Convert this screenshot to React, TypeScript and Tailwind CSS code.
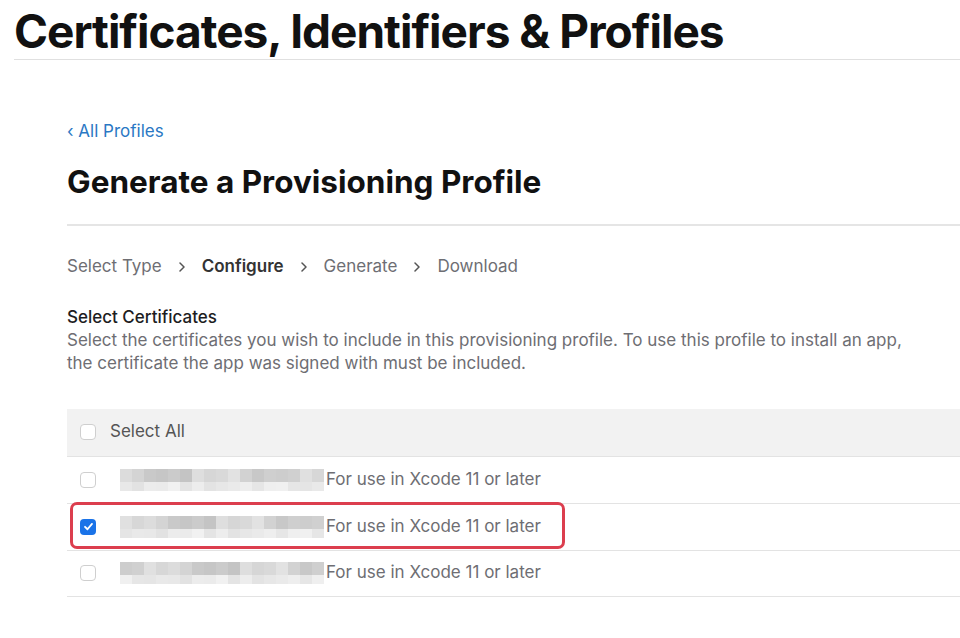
import React from "react";

const font = { fontFamily: "Inter, 'Noto Sans', sans-serif" };

const shades = [
  ["#c9c9c9", "#d6d6d6", "#cfcfcf", "#dcdcdc", "#c4c4c4", "#d2d2d2", "#e0e0e0", "#c6c6c6", "#d9d9d9", "#cdcdcd", "#d4d4d4", "#dedede", "#c8c8c8", "#d7d7d7", "#cbcbcb", "#e2e2e2", "#d0d0d0"],
  ["#e6e6e6", "#ececec", "#e3e3e3", "#efefef", "#e8e8e8", "#e4e4e4", "#eeeeee", "#e5e5e5", "#ebebeb", "#e7e7e7", "#f0f0f0", "#e2e2e2", "#ededed", "#e6e6e6", "#e9e9e9", "#f1f1f1", "#eaeaea"],
];

function Mosaic({ seed }: { seed: number }) {
  return (
    <div className="flex flex-col w-[204px] shrink-0">
      {shades.map((row, r) => (
        <div key={r} className={r === 0 ? "flex h-[13px]" : "flex h-[9px]"}>
          {row.map((_, i) => {
            const c = row[(i * 7 + seed * 3 + r) % row.length];
            return <div key={i} className="w-[12px] h-full" style={{ background: c }} />;
          })}
        </div>
      ))}
    </div>
  );
}

function Checkbox({ checked }: { checked?: boolean }) {
  if (checked)
    return (
      <div className="w-[16px] h-[16px] rounded-[4px] bg-[#1a73e8] flex items-center justify-center shrink-0">
        <svg width="11" height="11" viewBox="0 0 12 12" fill="none">
          <path d="M2.2 6.3 L4.9 9 L9.8 3.2" stroke="white" strokeWidth="2" strokeLinecap="round" strokeLinejoin="round" />
        </svg>
      </div>
    );
  return <div className="w-[16px] h-[16px] rounded-[4px] border border-[#cfcfcf] bg-white shrink-0" />;
}

function Chevron() {
  return (
    <svg width="6" height="12" viewBox="0 0 6 12" fill="none" className="ml-[17px] mr-[17px]">
      <path d="M1 2 L5 6 L1 10" stroke="#555" strokeWidth="1.5" strokeLinecap="round" strokeLinejoin="round" />
    </svg>
  );
}

function CertRow({ checked, seed, last }: { checked?: boolean; seed: number; last?: boolean }) {
  return (
    <div className={"relative h-[47px] flex items-center pl-[13px] border-t border-[#e3e3e3]" + (last ? " border-b" : "")}>
      <Checkbox checked={checked} />
      <div className="ml-[24px] flex items-center">
        <Mosaic seed={seed} />
        <span className="text-[17px] text-[#6e6e73] ml-[2px]">For use in Xcode 11 or later</span>
      </div>
      {checked && (
        <div className="absolute left-[3px] top-[-2px] w-[495px] h-[47px] rounded-[7px] border-[3px] border-[#dc3e4e]" />
      )}
    </div>
  );
}

export default function App() {
  return (
    <div className="w-[960px] h-[638px] bg-white overflow-hidden" style={font}>
      <div className="pl-[14px]">
        <h1 className="text-[46px] font-bold leading-[56px] pt-[3px] tracking-[-1px] text-[#111] border-b border-[#e0e0e0]">
          Certificates, Identifiers &amp; Profiles
        </h1>
      </div>

      <div className="pl-[67px]">
        <a className="block mt-[59px] text-[17px] leading-[24px] text-[#2a78c4]">‹ All Profiles</a>
        <h2 className="mt-[19px] text-[31.5px] font-bold leading-[40px] text-[#111] pb-[22px] border-b-2 border-[#e5e5e5]">
          Generate a Provisioning Profile
        </h2>

        <div className="mt-[28px] flex items-center text-[17px] text-[#6e6e73]">
          <span>Select Type</span>
          <Chevron />
          <span className="font-semibold text-[#333]">Configure</span>
          <Chevron />
          <span>Generate</span>
          <Chevron />
          <span>Download</span>
        </div>

        <div className="mt-[26px] text-[17px] leading-[23px] font-medium text-[#1d1d1f]">Select Certificates</div>
        <p className="w-[845px] text-[17px] leading-[23px] text-[#6e6e73]">
          Select the certificates you wish to include in this provisioning profile. To use this profile to install an app,
          the certificate the app was signed with must be included.
        </p>

        <div className="mt-[34px]">
          <div className="h-[47px] bg-[#f2f2f2] flex items-center pl-[13px]">
            <Checkbox />
            <span className="ml-[14px] text-[17px] text-[#555]">Select All</span>
          </div>
          <CertRow seed={1} />
          <CertRow seed={2} checked />
          <CertRow seed={3} last />
        </div>
      </div>
    </div>
  );
}
